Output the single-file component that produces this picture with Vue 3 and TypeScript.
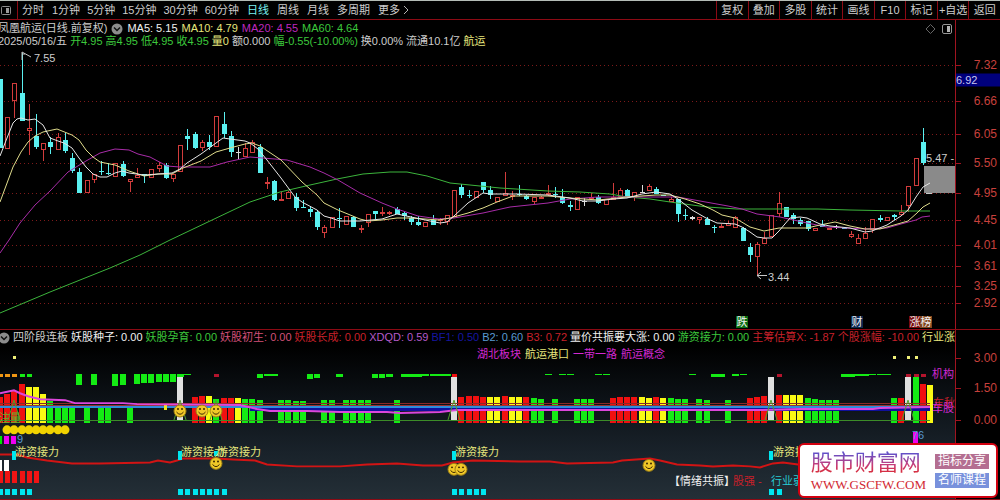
<script setup lang="ts">
type Kind = 'u' | 'd' | 'w'
type Candle = [Kind, number, number, number, number]
type Label = { text: string; x: number; y: number; tone: string }

const STEP = 7.21
const PLOT_W = 955
const PRICE_TOP = 20
const PRICE_H = 309
const IND_TOP = 329
const IND_H = 171

const cx = (i: number): number => Math.round(i * STEP)

const minuteTabs: string[] = ['1分钟', '5分钟', '15分钟', '30分钟', '60分钟']
const periodTabs: string[] = ['日线', '周线', '月线', '多周期']
const tools: string[] = ['复权', '叠加', '多股', '统计', '画线', 'F10', '标记', '+自选', '返回']

const averages = [
  { text: 'MA5: 5.15', tone: 'white' },
  { text: 'MA10: 4.79', tone: 'yellow' },
  { text: 'MA20: 4.55', tone: 'purple' },
  { text: 'MA60: 4.64', tone: 'green' },
]

const quote = [
  { text: '2025/05/16/五', tone: 'plain' },
  { text: '开4.95', tone: 'green' },
  { text: '高4.95', tone: 'green' },
  { text: '低4.95', tone: 'green' },
  { text: '收4.95', tone: 'green' },
  { text: '量0', tone: 'yellow' },
  { text: '额0.000', tone: 'plain' },
  { text: '幅-0.55(-10.00%)', tone: 'green' },
  { text: '换0.00%', tone: 'plain' },
  { text: '流通10.1亿', tone: 'plain' },
  { text: '航运', tone: 'yellow' },
]

const indicators = [
  { text: '四阶段连板', tone: 'plain' },
  { text: '妖股种子: 0.00', tone: 'white' },
  { text: '妖股孕育: 0.00', tone: 'green' },
  { text: '妖股初生: 0.00', tone: 'rose' },
  { text: '妖股长成: 0.00', tone: 'red' },
  { text: 'XDQD: 0.59', tone: 'orchid' },
  { text: 'BF1: 0.50', tone: 'navy' },
  { text: 'B2: 0.60', tone: 'sky' },
  { text: 'B3: 0.72', tone: 'red' },
  { text: '量价共振要大涨: 0.00', tone: 'white' },
  { text: '游资接力: 0.00', tone: 'green' },
  { text: '主筹估算X: -1.87', tone: 'red' },
  { text: '个股涨幅: -10.00', tone: 'red' },
  { text: '行业涨', tone: 'yellow' },
]

const sectors = [
  { text: '湖北板块', tone: 'magenta' },
  { text: '航运港口', tone: 'yellow' },
  { text: '一带一路', tone: 'magenta' },
  { text: '航运概念', tone: 'magenta' },
]

const priceTicks = [
  { v: '7.32', y: 65 }, { v: '6.66', y: 101 }, { v: '6.05', y: 134 }, { v: '5.50', y: 163 },
  { v: '4.95', y: 193 }, { v: '4.45', y: 220 }, { v: '4.01', y: 245 }, { v: '3.61', y: 266 },
  { v: '3.25', y: 286 }, { v: '2.92', y: 303 },
]
const indTicks = [{ v: '3.00', y: 357 }, { v: '1.50', y: 388 }, { v: '0.00', y: 420 }]

// kind, high, body top, body bottom, low
const candles: Candle[] = [
  ['d', 79, 79, 148, 148], ['u', 117, 117, 149, 149], ['u', 83, 83, 101, 118], ['d', 53, 93, 121, 121],
  ['u', 104, 128, 131, 155], ['d', 114, 136, 147, 149], ['u', 143, 143, 150, 161], ['d', 137, 142, 147, 154],
  ['u', 133, 137, 150, 150], ['d', 133, 140, 151, 153], ['d', 153, 158, 171, 173], ['d', 168, 172, 193, 193],
  ['u', 180, 180, 193, 193], ['u', 174, 174, 180, 183], ['d', 161, 171, 172, 175], ['d', 163, 173, 174, 175],
  ['u', 163, 163, 177, 177], ['d', 161, 164, 176, 177], ['u', 179, 179, 182, 192], ['u', 168, 175, 178, 178],
  ['d', 174, 174, 176, 183], ['u', 169, 169, 178, 178], ['u', 162, 165, 169, 172], ['d', 163, 165, 178, 179],
  ['u', 174, 174, 179, 182], ['u', 145, 145, 172, 172], ['d', 129, 136, 139, 150], ['d', 132, 134, 148, 149],
  ['u', 140, 142, 148, 151], ['d', 135, 142, 147, 150], ['u', 116, 116, 147, 147], ['d', 112, 124, 134, 138],
  ['d', 131, 136, 152, 157], ['w', 147, 152, 153, 160], ['u', 143, 148, 157, 157], ['u', 140, 142, 153, 153],
  ['d', 144, 147, 173, 173], ['u', 177, 182, 184, 189], ['d', 180, 181, 200, 201], ['u', 192, 199, 201, 201],
  ['u', 191, 192, 199, 199], ['d', 193, 197, 208, 211], ['d', 200, 207, 208, 208], ['d', 206, 209, 212, 217],
  ['d', 210, 212, 227, 230], ['u', 225, 227, 233, 238], ['u', 217, 217, 228, 228], ['d', 208, 218, 219, 228],
  ['u', 216, 216, 225, 225], ['d', 216, 217, 227, 227], ['u', 225, 228, 230, 233], ['u', 214, 214, 223, 227],
  ['d', 211, 211, 214, 219], ['u', 207, 212, 214, 216], ['u', 211, 212, 214, 215], ['d', 207, 209, 214, 214],
  ['d', 212, 213, 216, 220], ['d', 216, 218, 222, 225], ['d', 216, 222, 225, 226], ['u', 222, 222, 227, 227],
  ['d', 215, 220, 225, 225], ['u', 218, 219, 221, 225], ['u', 215, 215, 222, 225], ['u', 190, 190, 217, 217],
  ['d', 184, 187, 195, 198], ['d', 190, 195, 196, 198], ['u', 191, 191, 198, 198], ['d', 182, 182, 190, 193],
  ['d', 186, 190, 195, 199], ['u', 197, 197, 202, 202], ['u', 172, 193, 196, 196], ['u', 191, 195, 197, 200],
  ['d', 185, 194, 195, 196], ['d', 195, 196, 199, 200], ['u', 197, 197, 202, 204], ['u', 196, 197, 199, 199],
  ['u', 185, 193, 194, 196], ['d', 187, 194, 195, 198], ['d', 189, 197, 203, 204], ['d', 201, 205, 207, 211],
  ['u', 197, 197, 210, 210], ['w', 198, 201, 202, 206], ['u', 193, 197, 199, 199], ['d', 195, 197, 203, 204],
  ['u', 199, 199, 205, 205], ['u', 183, 197, 200, 200], ['u', 188, 190, 197, 197], ['d', 189, 190, 197, 198],
  ['u', 192, 192, 198, 201], ['w', 185, 192, 193, 193], ['u', 184, 186, 191, 191], ['d', 187, 189, 194, 194],
  ['d', 195, 195, 196, 196], ['u', 197, 199, 202, 202], ['d', 199, 199, 214, 222], ['d', 209, 215, 216, 220],
  ['w', 216, 217, 219, 220], ['u', 217, 217, 220, 224], ['d', 217, 219, 225, 225], ['d', 225, 227, 228, 233],
  ['u', 224, 226, 228, 228], ['u', 221, 223, 226, 226], ['u', 216, 217, 228, 228], ['d', 227, 228, 241, 241],
  ['d', 243, 247, 255, 262], ['u', 242, 244, 257, 275], ['u', 232, 238, 244, 244], ['u', 215, 215, 237, 237],
  ['u', 192, 203, 214, 217], ['d', 207, 207, 217, 217], ['d', 213, 215, 219, 224], ['d', 218, 220, 224, 226],
  ['d', 221, 221, 229, 231], ['u', 228, 228, 231, 231], ['d', 220, 225, 227, 227], ['u', 228, 228, 230, 230],
  ['w', 225, 227, 228, 229], ['d', 228, 228, 229, 229], ['u', 231, 234, 237, 238], ['u', 234, 238, 244, 244],
  ['u', 227, 233, 239, 239], ['u', 219, 219, 230, 233], ['d', 215, 218, 220, 222], ['u', 217, 217, 221, 221],
  ['d', 214, 215, 217, 220], ['u', 205, 212, 215, 215], ['u', 186, 186, 206, 212], ['u', 158, 158, 186, 186],
  ['d', 128, 142, 163, 165],
]

const ma5 = '0,156 7,138 13,123 17,119 21,118 28,120 35,119 43,125 50,138 58,141 64,143 72,148 79,158 86,167 93,174 100,177 107,177 115,173 122,171 129,173 144,175 158,174 172,173 180,169 187,163 201,154 216,143 223,138 230,139 245,141 250,143 258,149 267,160 281,178 295,197 302,202 317,210 324,216 331,218 340,221 360,221 382,219 397,214 411,217 430,221 440,223 447,222 454,216 468,203 483,193 490,194 517,194 548,195 570,198 583,201 598,201 613,199 627,198 642,194 656,192 670,194 678,199 692,210 706,218 717,223 735,224 742,227 750,232 757,237 764,238 772,238 779,231 790,218 800,217 807,218 820,224 830,226 850,228 865,232 872,231 887,225 901,216 908,210 916,197 923,187 930,183'
const ma10 = '0,202 13,167 21,152 28,142 35,136 43,132 57,129 72,135 79,140 86,150 93,157 100,162 115,165 129,171 144,176 158,174 172,174 183,168 201,161 216,152 230,148 245,144 252,143 260,146 281,160 302,182 317,195 324,203 338,210 360,219 368,221 382,220 397,218 411,218 439,220 450,218 468,213 483,208 497,202 513,196 548,196 570,198 598,200 627,197 656,195 670,195 685,199 700,204 713,210 722,215 735,218 750,227 764,231 779,228 807,228 820,225 835,222 850,226 865,229 880,229 894,225 908,221 917,213 923,207 930,203'
const ma20 = '0,253 9,240 20,223 35,205 50,191 68,172 86,161 100,153 115,149 129,150 138,154 150,157 167,166 180,167 210,167 227,162 250,157 287,160 310,167 324,173 338,180 360,193 382,203 397,209 418,216 439,219 454,218 483,213 510,207 548,203 570,199 598,197 627,197 656,197 678,197 700,201 728,206 742,209 757,214 780,217 807,223 827,227 865,229 887,228 901,224 916,220 922,217 930,216'
const ma60 = '0,313 50,292 110,268 140,255 170,240 250,202 280,192 310,185 337,179 363,174 390,172 407,172 427,176 450,183 470,185 500,188 548,191 580,192 610,194 627,197 650,199 677,203 707,207 737,209 770,209 818,209 850,210 901,211 930,211'

// slot, colour, top
const bars: [number, string, number][] = [
  [0, 'r', 397], [1, 'r', 394], [2, 'r', 391], [3, 'r', 384], [4, 'y', 387], [5, 'y', 387], [6, 'y', 394],
  [7, 'g', 401], [8, 'g', 405], [9, 'g', 405], [10, 'g', 405], [12, 'g', 405], [14, 'g', 405], [15, 'g', 405], [18, 'g', 405],
  [27, 'r', 397], [28, 'r', 396], [29, 'y', 396], [30, 'g', 399], [31, 'r', 398], [32, 'r', 398], [33, 'y', 398],
  [34, 'g', 399], [35, 'g', 399], [36, 'g', 400], [39, 'g', 400], [40, 'g', 400], [41, 'g', 401], [42, 'g', 401],
  [45, 'g', 400], [46, 'g', 400], [48, 'g', 400], [49, 'g', 400], [50, 'g', 400], [51, 'g', 400], [55, 'g', 400],
  [64, 'r', 397], [65, 'r', 396], [66, 'r', 396], [67, 'r', 397], [68, 'y', 397], [69, 'y', 397], [70, 'r', 396],
  [71, 'y', 397], [72, 'y', 397], [73, 'r', 397], [74, 'g', 398], [75, 'g', 399], [77, 'g', 399], [80, 'g', 399],
  [81, 'g', 399], [82, 'g', 399], [85, 'r', 398], [86, 'r', 397], [87, 'r', 397], [88, 'r', 397], [89, 'y', 397],
  [90, 'y', 398], [91, 'r', 397], [92, 'y', 398], [93, 'g', 398], [94, 'g', 399], [95, 'g', 399], [97, 'g', 399],
  [98, 'g', 400], [101, 'g', 400], [104, 'r', 398], [105, 'r', 397], [106, 'r', 396], [108, 'r', 395], [109, 'y', 395],
  [110, 'y', 395], [111, 'y', 395], [112, 'g', 398], [113, 'g', 399], [114, 'g', 400], [115, 'g', 400], [116, 'g', 400],
  [124, 'g', 398], [125, 'r', 398], [127, 'g', 377], [128, 'r', 384], [129, 'y', 385],
]

// slot, height of the block that hangs from the upper rail
const hanging: [number, number][] = [
  [11, 11], [13, 11], [16, 12], [17, 11], [19, 10], [20, 9], [21, 9], [22, 8], [23, 8], [24, 8], [25, 3], [26, 1],
  [36, 4], [37, 2], [38, 2], [43, 5], [44, 4], [47, 3], [52, 4], [53, 4], [54, 3], [56, 3], [57, 3], [58, 3],
  [59, 2], [60, 2], [61, 2], [62, 2], [76, 1], [78, 1], [79, 1], [83, 1], [84, 1], [96, 1], [99, 3], [100, 3],
  [102, 2], [103, 1], [117, 3], [118, 3], [119, 2], [120, 2], [121, 1], [122, 1], [123, 1],
]
const rail: [number, string][] = [
  [0, 'o'], [1, 'o'], [2, 'o'], [3, 'g'], [4, 'g'], [30, 'm'], [63, 'r'], [108, 'm'], [126, 'm'], [127, 'm'], [128, 'm'],
]
const pillars: number[] = [25, 63, 107, 126]
const peaks: number[] = [2, 25, 30, 63, 107, 126]
const dots: number[] = [2, 124, 126, 127]
const coins: number[] = [1, 2, 3, 4, 5, 6, 7, 8, 9]
const flags: number[] = [2, 25, 30, 63, 107]
const bottomMarks: number[] = [0, 1, 2, 3, 4, 25, 26, 27, 28, 29, 30, 31, 63, 64, 65, 66, 67, 107, 108]
const faces: [number, number][] = [[180, 411], [202, 411], [216, 411], [216, 464], [454, 470], [461, 470], [649, 466]]

const strength = '0,393 14,390 20,393 28,396 40,399 65,400 75,403 123,403 137,404 240,405 257,409 270,411 307,411 340,412 387,412 400,413 440,412 457,410 520,410 727,410 760,410 800,409 873,409 880,408 930,407'
const mood = '0,455 17,455 27,458 47,461 72,464 100,464 150,463 158,461 170,463 177,461 183,459 217,459 233,460 255,461 267,465 297,467 340,467 367,465 397,464 423,466 442,466 453,463 473,461 520,462 550,462 567,464 613,463 622,461 650,459 660,461 677,465 700,466 713,467 733,466 750,467 760,468 773,464 783,463 798,465 830,466'

const priceLabels: Label[] = [
  { text: '7.55', x: 34, y: 58, tone: 'plain' },
  { text: '3.44', x: 768, y: 277, tone: 'plain' },
  { text: '5.47 -', x: 926, y: 158, tone: 'plain' },
]
const badges: Label[] = [
  { text: '跌', x: 736, y: 322, tone: 'b-green' },
  { text: '财', x: 851, y: 322, tone: 'b-navy' },
  { text: '涨', x: 909, y: 322, tone: 'b-red' },
  { text: '榜', x: 920, y: 322, tone: 'b-brown' },
]
const indLabels: Label[] = [
  { text: '注量', x: -1, y: 418, tone: 'lime' },
  { text: '9', x: 17, y: 439, tone: 'sky' },
  { text: '游资接力', x: 15, y: 452, tone: 'yellow' },
  { text: '游资接力', x: 181, y: 452, tone: 'yellow' },
  { text: '游资接力', x: 217, y: 452, tone: 'yellow' },
  { text: '游资接力', x: 455, y: 452, tone: 'yellow' },
  { text: '游资接力', x: 773, y: 452, tone: 'yellow' },
  { text: '机构', x: 932, y: 374, tone: 'magenta' },
  { text: '车秋', x: 933, y: 403, tone: 'red' },
  { text: '车股', x: 932, y: 408, tone: 'magenta' },
  { text: '76', x: 912, y: 435, tone: 'sky' },
  { text: '【情绪共振】', x: 669, y: 482, tone: 'white' },
  { text: '股强 -', x: 733, y: 482, tone: 'red' },
  { text: '行业弱', x: 771, y: 482, tone: 'cyan' },
]

const inPrice = (x: number, y: number) => ({
  left: `${(x / PLOT_W) * 100}%`,
  top: `${((y - PRICE_TOP) / PRICE_H) * 100}%`,
})
const inInd = (x: number, y: number) => ({
  left: `${(x / PLOT_W) * 100}%`,
  top: `${((y - IND_TOP) / IND_H) * 100}%`,
})
</script>

<template>
  <main class="terminal">
    <nav class="toolbar">
      <button class="side" type="button" aria-label="侧栏">
        <svg width="12" height="11" viewBox="0 0 12 11">
          <rect x="1.5" y="1.5" width="9" height="8" rx="1" fill="none" stroke="#8c8c8c" />
          <rect x="6" y="3" width="3" height="5" fill="#9a9a9a" />
        </svg>
      </button>
      <div class="tabs">
        <button type="button">分时</button>
        <div class="minutes"><button v-for="t in minuteTabs" :key="t" type="button">{{ t }}</button></div>
        <button v-for="t in periodTabs" :key="t" type="button" :class="{ active: t === '日线' }">{{ t }}</button>
        <button class="more" type="button">更多
          <svg width="6" height="10" viewBox="0 0 6 10"><path d="M1 1L5 5L1 9" fill="none" stroke="#b4b4b4" /></svg>
        </button>
      </div>
      <div class="tools"><button v-for="t in tools" :key="t" type="button">{{ t }}</button></div>
    </nav>

    <section class="panel price">
      <div class="plot">
        <svg class="canvas" :viewBox="`0 ${PRICE_TOP} ${PLOT_W} ${PRICE_H}`" preserveAspectRatio="none">
          <line v-for="t in priceTicks" :key="t.v" class="grid" x1="0" :x2="PLOT_W" :y1="t.y + 0.5" :y2="t.y + 0.5" />
          <rect x="924" y="166" width="31" height="27" fill="#8a8a8a" />
          <g v-for="(c, i) in candles" :key="i" :class="c[0]" shape-rendering="crispEdges">
            <template v-if="c[0] === 'u'">
              <path :d="`M${cx(i) + 0.5} ${c[1]}V${c[2]}M${cx(i) + 0.5} ${c[3]}V${c[4]}`" />
              <rect :x="cx(i) - 1.5" :y="c[2] + 0.5" width="4" :height="Math.max(1, c[3] - c[2] - 1)" />
            </template>
            <template v-else>
              <path :d="`M${cx(i) + 0.5} ${c[1]}V${c[4]}`" />
              <rect :x="cx(i) - 2" :y="c[2]" width="5" :height="c[3] - c[2]" />
            </template>
          </g>
          <polyline class="ma" :points="ma60" stroke="#3cb43c" />
          <polyline class="ma" :points="ma20" stroke="#a82ca8" />
          <polyline class="ma" :points="ma10" stroke="#e0dc8c" />
          <polyline class="ma" :points="ma5" stroke="#e6e6e6" />
          <path d="M22 60V52L31 57M22 54H25M767 275.5H757M761 272L757 275.5L761 279M926 193.5H932" class="arrow" />
        </svg>
        <div class="line-one">
          <h1>凤凰航运(日线.前复权)</h1>
          <button type="button" class="round" aria-label="展开">
            <svg width="12" height="12" viewBox="0 0 12 12"><circle cx="6" cy="6" r="5.5" fill="#8c8c8c" /><path d="M3 4.5L6 7.5L9 4.5" fill="none" stroke="#111" stroke-width="1.5" /></svg>
          </button>
          <span v-for="a in averages" :key="a.text" :class="a.tone">{{ a.text }}</span>
          <svg class="corner" width="28" height="12" viewBox="0 0 28 12">
            <path d="M5.5 1.5L10 6L5.5 10.5L1 6Z" fill="none" stroke="#666" />
            <rect x="17.5" y="1.5" width="9" height="9" rx="1.5" fill="none" stroke="#969696" />
            <rect x="22" y="3" width="3" height="6" fill="#b4b4b4" />
          </svg>
        </div>
        <div class="line-two"><span v-for="q in quote" :key="q.text" :class="q.tone">{{ q.text }}</span></div>
        <span v-for="l in priceLabels" :key="l.text" class="label" :class="l.tone" :style="inPrice(l.x, l.y)">{{ l.text }}</span>
        <span v-for="l in badges" :key="l.text" class="label badge" :class="l.tone" :style="inPrice(l.x, l.y)">{{ l.text }}</span>
      </div>
      <div class="axis">
        <span v-for="t in priceTicks" :key="t.v" class="tick" :style="{ top: inPrice(0, t.y).top }">{{ t.v }}</span>
        <span class="cursor" :style="{ top: inPrice(0, 80).top }">6.92</span>
      </div>
    </section>

    <section class="panel indicator">
      <div class="plot">
        <svg class="canvas" :viewBox="`0 ${IND_TOP} ${PLOT_W} ${IND_H}`" preserveAspectRatio="none">
          <g shape-rendering="crispEdges">
            <rect v-for="b in bars" :key="b[0]" :class="`f-${b[1]}`" :x="cx(b[0]) - 3" :y="b[2]" width="6" :height="423 - b[2]" />
            <rect v-for="h in hanging" :key="h[0]" class="f-g" :x="cx(h[0]) - 3" y="374" :width="h[1] > 3 ? 6 : 7" :height="h[1]" />
            <rect v-for="i in pillars" :key="i" fill="#e0e0e0" :x="cx(i) - 3" y="377" width="6" height="44" />
            <rect v-for="r in rail" :key="r[0]" :class="`f-${r[1]}`" :x="cx(r[0]) - 2" y="374" width="5" height="3" />
            <rect v-for="i in dots" :key="i" fill="#f0f078" :x="cx(i) - 1" y="355" width="3" height="3" />
            <rect x="0" y="403" width="930" height="1" fill="#8c2828" />
            <rect x="0" y="405" width="930" height="1" fill="#963232" />
            <rect x="250" y="408" width="680" height="3" fill="#10109c" />
            <rect x="0" y="406" width="930" height="2" fill="#2e8cdc" />
            <rect x="0" y="420" width="930" height="1" fill="#3c8c28" />
            <rect x="164" y="404" width="3" height="6" fill="#f0e61e" />
          </g>
          <polyline :points="strength" class="curve" stroke="#dc46dc" />
          <path v-for="i in peaks" :key="i" :d="`M${cx(i) - 6} 420L${cx(i)} 400L${cx(i) + 6} 420`" fill="none" stroke="#50a028" />
          <polyline :points="mood" class="curve" stroke="#d21414" />
          <g shape-rendering="crispEdges">
            <rect x="0" y="436" width="2" height="8" fill="#00e600" />
            <rect x="4" y="436" width="5" height="8" fill="#f000f0" />
            <rect x="11" y="436" width="5" height="8" fill="#f000f0" />
            <rect x="913" y="432" width="5" height="12" fill="#f000f0" />
            <rect v-for="i in flags" :key="i" fill="#00e6f0" :x="cx(i) - 2" y="451" width="4" :height="i === 30 ? 5 : 10" />
            <rect x="0" y="461" width="2" height="11" fill="#fff" />
            <rect x="4" y="461" width="5" height="11" fill="#fff" />
            <rect v-for="i in 6" :key="i" fill="#f01414" :x="cx(i - 1) - 2" y="472" width="5" height="12" />
            <rect v-for="i in bottomMarks" :key="i" fill="#00e6f0" :x="cx(i) - 2" y="490" width="5" height="6" />
          </g>
          <circle v-for="i in coins" :key="i" :cx="cx(i)" cy="430" r="4.5" fill="#f0d200" />
          <g v-for="(f, i) in faces" :key="i" :transform="`translate(${f[0]} ${f[1]})`">
            <circle r="6" fill="#f0c828" stroke="#a08214" />
            <circle cx="-2" cy="-2" r="1" fill="#3c2800" />
            <circle cx="2" cy="-2" r="1" fill="#3c2800" />
            <path d="M-3.5 1Q0 5.5 3.5 1" fill="none" stroke="#3c2800" />
          </g>
        </svg>
        <div class="line-one">
          <button type="button" class="round" aria-label="展开">
            <svg width="10" height="12" viewBox="0 0 10 12"><circle cx="4" cy="6" r="5.5" fill="#8c8c8c" /><path d="M1 4.5L4 7.5L7 4.5" fill="none" stroke="#111" stroke-width="1.5" /></svg>
          </button>
          <span v-for="a in indicators" :key="a.text" :class="a.tone">{{ a.text }}</span>
        </div>
        <div class="sectors"><span v-for="s in sectors" :key="s.text" :class="s.tone">{{ s.text }}</span></div>
        <span v-for="(l, i) in indLabels" :key="i" class="label" :class="l.tone" :style="inInd(l.x, l.y)">{{ l.text }}</span>
      </div>
      <div class="axis">
        <span v-for="t in indTicks" :key="t.v" class="tick" :style="{ top: inInd(0, t.y).top }">{{ t.v }}</span>
      </div>
    </section>

    <aside class="brand">
      <div class="name">
        <strong>股市财富网</strong>
        <a href="#">WWW.GSCFW.COM</a>
      </div>
      <div class="tags"><span>指标分享</span><span class="blue">名师课程</span></div>
    </aside>
  </main>
</template>

<style>
body {
  margin: 0;
  background: #000;
}
</style>

<style scoped>
.terminal {
  position: relative;
  box-sizing: border-box;
  display: grid;
  grid-template-columns: minmax(0, 1fr);
  grid-template-rows: 20px minmax(0, 309fr) minmax(0, 171fr);
  height: 100vh;
  min-height: 400px;
  overflow: hidden;
  background: #000;
  color: #cdcdcd;
  font: 11px/13px "Liberation Sans", "Noto Sans CJK SC", sans-serif;
  white-space: nowrap;
}
button {
  padding: 0;
  border: 0;
  background: none;
  color: inherit;
  font: inherit;
  cursor: pointer;
}
svg {
  display: block;
}
.toolbar {
  display: flex;
  align-items: stretch;
  border-top: 1px solid #b4bcb6;
  border-bottom: 1px solid #8c0a14;
}
.side {
  display: flex;
  align-items: center;
  width: 18px;
  box-sizing: border-box;
  border-right: 1px solid #8c0a14;
}
.tabs {
  display: flex;
  flex: 1;
  gap: 8px;
  padding-left: 4px;
}
.minutes {
  display: flex;
  gap: 7px;
}
.active {
  color: #78f0f0;
}
.more {
  display: flex;
  align-items: center;
  gap: 3px;
}
.tools {
  display: grid;
  grid-template-columns: repeat(9, 1fr);
  width: 284px;
}
.tools button {
  border-left: 1px solid #8c0a14;
}
.panel {
  display: flex;
  min-height: 0;
}
.indicator {
  border-top: 1px solid #8c0a14;
  border-bottom: 1px solid #8c0a14;
}
.plot {
  position: relative;
  flex: 1;
  min-width: 0;
  overflow: hidden;
}
.indicator .plot {
  background: linear-gradient(#000 10%, #0c1116 40%, #19222a 72%, #242f37);
}
.canvas {
  position: absolute;
  inset: 0;
  width: 100%;
  height: 100%;
}
.axis {
  position: relative;
  flex: none;
  width: 44px;
  border-left: 1px solid #a01420;
}
.tick {
  position: absolute;
  right: 3px;
  left: 0;
  transform: translateY(-50%);
  color: #c8403c;
  font-size: 12px;
  line-height: 14px;
  text-align: right;
}
.tick::before {
  position: absolute;
  top: 7px;
  left: 0;
  width: 5px;
  height: 1px;
  background: #a01420;
  content: "";
}
.cursor {
  position: absolute;
  right: 0;
  left: 0;
  transform: translateY(-50%);
  background: #00007c;
  color: #c8c8f0;
}
.line-one,
.line-two,
.sectors {
  position: relative;
  display: flex;
  align-items: center;
}
.line-one {
  gap: 4px;
}
.line-one > * {
  flex: none;
}
.price .line-one {
  padding-top: 2px;
}
.indicator .line-one {
  gap: 3px;
  padding-top: 1px;
}
.indicator .round {
  width: 10px;
}
.line-two {
  gap: 3px;
  margin-left: -2px;
}
h1 {
  margin: 0 0 0 -2px;
  font: inherit;
}
.corner {
  margin-left: auto;
  margin-right: 2px;
}
.sectors {
  justify-content: center;
  gap: 4px;
  padding: 4px 0 0 187px;
}
.grid {
  stroke: #7d1a1a;
  stroke-dasharray: 1 3;
}
.u {
  fill: #000;
  stroke: #d23c3c;
}
.d {
  stroke: #5af0f0;
}
.d rect {
  fill: #5af0f0;
  stroke: none;
}
.w {
  stroke: #dcdcdc;
}
.w rect {
  fill: #dcdcdc;
  stroke: none;
}
.ma {
  fill: none;
  stroke-width: 1;
}
.arrow {
  fill: none;
  stroke: #c8c8c8;
}
.curve {
  fill: none;
  stroke-width: 2;
}
.f-r {
  fill: #f01010;
}
.f-y {
  fill: #fafa14;
}
.f-g {
  fill: #14eb14;
}
.f-o {
  fill: #f09614;
}
.f-m {
  fill: #b4142d;
}
.label {
  position: absolute;
  transform: translateY(-50%);
}
.badge {
  width: 12px;
  height: 12px;
  color: #f0f0f0;
  line-height: 12px;
  text-align: center;
}
.b-green {
  background: #0a6e14;
}
.b-navy {
  background: #0c2850;
}
.b-red {
  background: #780a0a;
}
.b-brown {
  background: #82461e;
}
.plain {
  color: #cdcdcd;
}
.white {
  color: #f0f0f0;
}
.yellow {
  color: #e6e67d;
}
.purple {
  color: #be28be;
}
.magenta {
  color: #d228d2;
}
.orchid {
  color: #b45ac8;
}
.green {
  color: #3cc83c;
}
.lime {
  color: #64b428;
}
.rose {
  color: #d25078;
}
.red {
  color: #c8202a;
}
.navy {
  color: #1616a0;
}
.sky {
  color: #5a9bd2;
}
.cyan {
  color: #28c8d2;
}
.brand {
  position: absolute;
  right: 2px;
  bottom: 2px;
  box-sizing: border-box;
  display: flex;
  align-items: center;
  gap: 9px;
  height: 55px;
  padding: 0 7px 0 11px;
  border: 2px solid #d2000f;
  border-radius: 6px;
  background: #fff;
}
.name {
  display: flex;
  flex-direction: column;
  gap: 3px;
}
.name strong {
  background: linear-gradient(#6450c8 15%, #c83c78 60%, #dc2828);
  background-clip: text;
  color: transparent;
  font-size: 22px;
  font-weight: 400;
  line-height: 25px;
}
.name a {
  color: #d22832;
  font: 13px/14px "Liberation Serif", serif;
  text-decoration: none;
}
.tags {
  display: grid;
  gap: 4px;
}
.tags span {
  padding: 0 3px;
  background: #b46e91;
  color: #fff;
  font-size: 12px;
  line-height: 15px;
}
.tags .blue {
  background: #7891dc;
}
</style>
